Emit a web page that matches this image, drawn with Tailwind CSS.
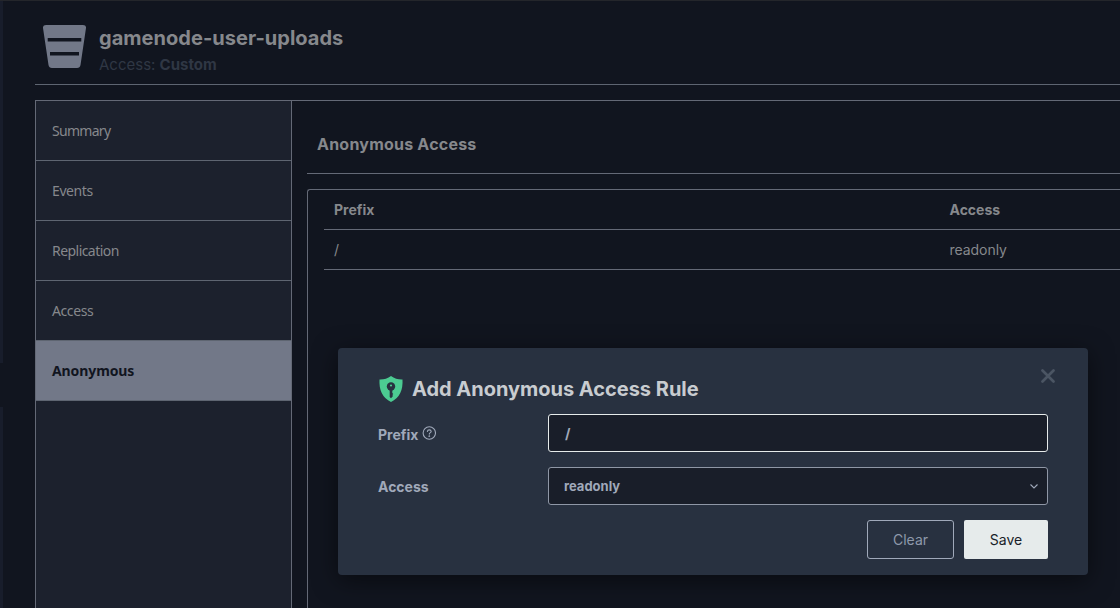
<!DOCTYPE html>
<html lang="en">
<head>
<meta charset="utf-8">
<title>gamenode-user-uploads</title>
<script src="https://cdn.jsdelivr.net/npm/@tailwindcss/browser@4"></script>
</head>
<body class="bg-[#11151f] font-['Inter',sans-serif] text-[#86888c] overflow-hidden">
<div class="relative flex w-[1120px] h-[608px] overflow-hidden border-t border-[#24262b]">
  <aside class="flex w-[3px] shrink-0 flex-col bg-[#181d2b]">
    <div class="mt-[362px] h-11 bg-[#11151f]"></div>
  </aside>
  <main class="flex flex-1 flex-col pl-8">
    <header class="flex h-[84px] shrink-0 items-start border-b border-[#5e6571] pl-2">
      <svg class="mt-6 h-[43px] w-[43px] shrink-0" viewBox="0 0 43 43" fill="#727888">
        <path fill-rule="evenodd" d="M3 0H40Q43.3 0 43 3L37.500 40Q37 43 34 43H9Q6 43 5.500 40L0 3Q-.3 0 3 0ZM4.700 13V16.500H38.300V13ZM7 27V30.500H36V27Z"/>
      </svg>
      <div class="ml-[13px] mt-[25px] flex flex-col">
        <h1 class="text-[20px] leading-6 font-bold tracking-[0.03px]">gamenode-user-uploads</h1>
        <p class="mt-[5px] text-[15px] leading-5 text-[#2f3744]">Access: <b>Custom</b></p>
      </div>
    </header>
    <section class="mt-[15px] flex flex-1 border-t border-l border-[#646976]">
      <nav class="flex w-64 shrink-0 flex-col border-r border-[#646976] bg-[#1c212d] font-['Noto_Sans',sans-serif] text-[14px] tracking-[-0.55px]">
        <a class="flex h-[60px] items-center border-b border-[#5e6571] pl-4"><span class="tracking-[-0.7px]">Summary</span></a>
        <a class="flex h-[60px] items-center border-b border-[#5e6571] pl-4"><span class="tracking-[-0.4px]">Events</span></a>
        <a class="flex h-[60px] items-center border-b border-[#5e6571] pl-4"><span>Replication</span></a>
        <a class="flex h-[60px] items-center border-b border-[#5e6571] pl-4"><span class="tracking-[-0.4px]">Access</span></a>
        <a class="flex h-[60px] items-center border-b border-[#5e6571] bg-[#727888] pl-4 font-bold tracking-[-0.1px] text-[#11151f]"><span>Anonymous</span></a>
      </nav>
      <div class="flex flex-1 flex-col pl-[15px]">
        <div class="flex h-[73px] shrink-0 items-center border-b border-[#646976] pt-[14px] pl-[10px]">
          <h2 class="text-[16px] leading-6 font-bold tracking-[0.22px]">Anonymous Access</h2>
        </div>
        <div class="mt-[15px] flex-1 rounded-tl-[3px] border-t border-l border-[#646976] pl-4 text-[14px]">
          <div class="flex h-10 items-center border-b border-[#646976] pl-[10px] font-bold"><span class="w-[615.500px]">Prefix</span><span>Access</span></div>
          <div class="flex h-10 items-center border-b border-[#646976] pl-[10px]"><span class="w-[615.500px]">/</span><span class="tracking-[-0.05px]">readonly</span></div>
        </div>
      </div>
    </section>
  </main>

  <div class="absolute left-[338px] top-[347px] flex h-[227px] w-[750px] flex-col rounded-[4px] bg-[#283140] px-10 shadow-[0_5px_25px_rgba(0,0,0,0.5)]">
    <svg class="absolute left-[703px] top-[21px] h-[14px] w-[14px]" viewBox="0 0 14 14" stroke="#4b5563" stroke-width="2.700" stroke-linecap="round"><path d="M1.500 1.500 12.500 12.500M12.500 1.500 1.500 12.500"/></svg>
    <div class="mt-7 flex h-[26px] items-center">
      <svg class="h-[26px] w-[26px]" viewBox="0 0 26 26" fill="none">
        <path fill="#4ccb92" d="M13 0Q18 3.700 24.500 3.500Q25.500 20 13 26Q.5 20 1.500 3.500Q8 3.700 13 0Z"/>
        <circle cx="13" cy="10.500" r="4.200" fill="#283140"/>
        <circle cx="13" cy="9.500" r="1.100" fill="#4ccb92"/>
        <path fill="#283140" d="M11.700 13H14.300V17L15.300 18 14.300 19 15 20 13 22.200 11.700 21Z"/>
      </svg>
      <h3 class="ml-2 text-[20px] leading-6 font-bold tracking-[-0.02px] text-[#c8ccd0]">Add Anonymous Access Rule</h3>
    </div>
    <div class="mt-3 flex h-[38px] items-center">
      <div class="flex w-[170px] items-center pt-[2px] text-[14px] font-bold text-[#a0a9ba]"><span>Prefix</span>
        <svg class="ml-[4px] -mt-[3px] h-[14px] w-[14px]" viewBox="0 0 14 14" fill="none" stroke="#a0a9ba" stroke-width="1.100"><circle cx="7.300" cy="7" r="6.200"/><path stroke-linecap="round" d="M5.400 5.500Q5.500 3.900 7.300 3.900T9.200 5.500C9.200 6.700 7.300 6.600 7.300 8.100"/><circle cx="7.300" cy="10.200" r=".3"/></svg>
      </div>
      <div class="flex h-[38px] w-[500px] items-center rounded-[3px] border border-[#e6ebeb] bg-[#191e29] pl-4 text-[14px] font-bold text-[#a0a9ba]"><span>/</span></div>
    </div>
    <div class="mt-[15px] flex h-[38px] items-center">
      <div class="w-[170px] text-[14px] font-bold text-[#a0a9ba]">Access</div>
      <div class="flex h-[38px] w-[500px] items-center justify-between rounded-[3px] border border-[#8f97a6] bg-[#191e29] pr-[9px] pl-[15px] text-[13px] font-bold text-[#a0a9ba]"><span class="pt-[2px]">readonly</span>
        <svg class="h-2 w-2" viewBox="0 0 8 8" fill="none" stroke="#a0a9ba" stroke-width="1.100"><path d="M.5 2.500 4 6 7.500 2.500"/></svg>
      </div>
    </div>
    <div class="mt-[15px] flex justify-end gap-[10px] text-[14px]">
      <button class="h-[39px] w-[87px] rounded-[3px] border border-[#a0a9ba] text-[#8e99ab]">Clear</button>
      <button class="h-[39px] w-[84px] rounded-[2px] bg-[#e6ebeb] text-[#191e29]">Save</button>
    </div>
  </div>
</div>
</body>
</html>
